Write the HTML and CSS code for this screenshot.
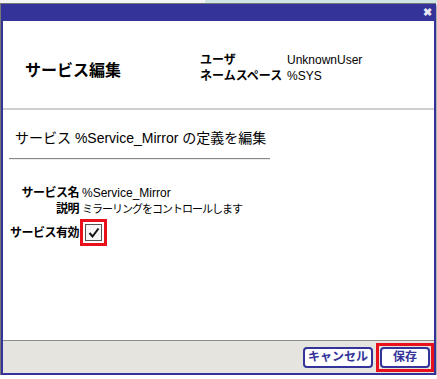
FILE: index.html
```html
<!DOCTYPE html>
<html>
<head>
    <meta charset="utf-8" />
    <title>サービス編集</title>
    <link rel="stylesheet" href="styles.css">
</head>
<body>
    <!-- 後ろのページ(上端だけ見える) -->
    <div class="behind">
        <div class="behind-left"></div>
        <div class="behind-right"></div>
    </div>
    <!-- ダイアログ -->
    <div class="dialog">
        <div class="frame">
            <div class="titlebar">
                <span class="close">&#x2716;</span>
            </div>
            <div class="content">
                <div class="head">
                    <div class="head-title">サービス編集</div>
                    <div class="user-info">
                        <span class="ui-label">ユーザ</span><span class="ui-value">UnknownUser</span>
                        <span class="ui-label">ネームスペース</span><span class="ui-value">%SYS</span>
                    </div>
                </div>
                <div class="body">
                    <div class="body-title">サービス %Service_Mirror の定義を編集</div>
                    <hr class="rule" />
                    <div class="form">
                        <span class="f-label">サービス名</span><span class="f-value">%Service_Mirror</span>
                        <span class="f-label">説明</span><span class="f-value f-jp">ミラーリングをコントロールします</span>
                        <span class="f-label f-last">サービス有効</span>
                        <span class="f-last">
                            <span class="mark-box">
                                <span class="checkbox">
                                    <svg width="14" height="14" viewBox="0 0 14 14">
                                        <path d="M2.5 7 L5.5 10.5 L11.5 2.5" fill="none" stroke="#111" stroke-width="2" />
                                    </svg>
                                </span>
                            </span>
                        </span>
                    </div>
                </div>
            </div>
            <div class="footer">
                <button class="btn btn-cancel">キャンセル</button>
                <span class="mark-btn"><button class="btn btn-save">保存</button></span>
            </div>
        </div>
    </div>
</body>
</html>
```

FILE: styles.css
```css
/*リセット*/
body{
    margin: 0;
    background: #fff;
    font-family: "Liberation Sans", "Noto Sans CJK JP", sans-serif;
    color: #000;
}
/*後ろのページ*/
.behind{
    display: flex;
    height: 3px;
}
.behind-left{
    width: 205px;
    background: #f4f4f4;
}
.behind-right{
    flex: 1;
    background: #cfe6e4;
}
/*ダイアログ外枠*/
.dialog{
    width: 436px;
    border-left: 1px solid #777;
    border-top: 1px solid #777;
    box-sizing: border-box;
    box-shadow: 1px 2px 2px rgba(0,0,0,0.45);
}
.frame{
    border: 2px solid #333399;
    border-top: 0;
}
/*タイトルバー*/
.titlebar{
    height: 17px;
    background: #333399;
    display: flex;
    justify-content: flex-end;
    align-items: center;
    margin-left: -2px;
    margin-right: -2px;
    padding-right: 4px;
}
.close{
    color: #e8e8f4;
    font-size: 11px;
    font-weight: bold;
    line-height: 11px;
}
.content{
    background: #fff;
    height: 319px;
}
/*ヘッダー*/
.head{
    height: 89px;
    display: flex;
    align-items: center;
    padding: 6px 0 0 22px;
    box-sizing: border-box;
    border-bottom: 2px solid #cfcfcf;
}
.head-title{
    width: 175px;
    font-size: 16px;
    font-weight: bold;
    padding-top: 2px;
}
.user-info{
    display: grid;
    grid-template-columns: 84px auto;
    column-gap: 3px;
    font-size: 12px;
    line-height: 16px;
}
.ui-label{
    font-weight: bold;
}
/*本文*/
.body{
    padding-top: 20px;
}
.body-title{
    font-size: 14px;
    line-height: 17px;
    padding-left: 12px;
}
.rule{
    width: 261px;
    margin: 11px 0 0 6px;
    border: 0;
    border-top: 1px solid #888;
    border-bottom: 1px solid #ececec;
    height: 0;
}
.form{
    display: grid;
    grid-template-columns: 72px auto;
    column-gap: 3px;
    margin: 25px 0 0 4px;
    font-size: 12px;
    line-height: 16px;
    align-items: center;
}
.f-label{
    font-weight: bold;
    text-align: right;
    letter-spacing: -0.5px;
}
.f-jp{
    font-size: 11px;
    letter-spacing: -1px;
}
.f-last{
    margin-top: 2px;
}
/*赤枠*/
.mark-box{
    display: inline-flex;
    margin-left: -2px;
    border: 3px solid #e8111b;
    padding: 2px;
    vertical-align: middle;
}
.checkbox{
    width: 15px;
    height: 15px;
    border: 1px solid #555;
    background: #f6f6f6;
    display: flex;
    align-items: center;
    justify-content: center;
}
/*フッター*/
.footer{
    height: 32px;
    border-top: 1px solid #8c8c8c;
    background: #e6e4df;
    display: flex;
    justify-content: flex-end;
    align-items: center;
    gap: 3px;
}
.btn{
    height: 21px;
    padding: 0;
    border: 2px solid #333399;
    border-radius: 4px;
    background: #fff;
    color: #333399;
    font-family: inherit;
    font-size: 12px;
    font-weight: bold;
    line-height: 17px;
}
.btn-cancel{
    width: 70px;
}
.btn-save{
    width: 50px;
}
.mark-btn{
    display: inline-flex;
    border: 3px solid #e8111b;
    padding: 1px;
}
```
